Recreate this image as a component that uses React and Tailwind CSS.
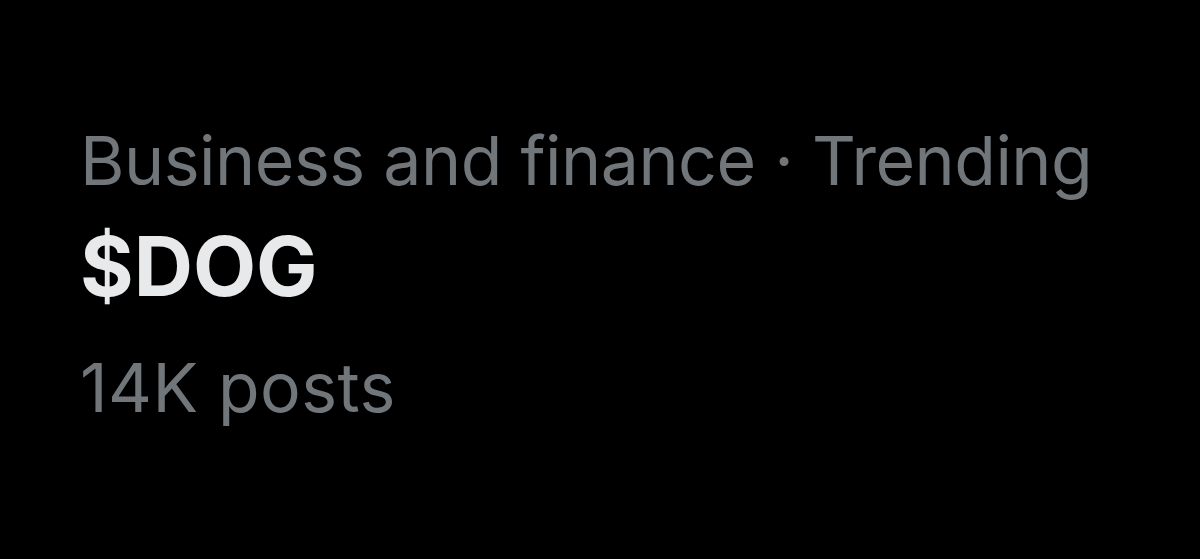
export default function App() {
  return (
    <div className="w-[1200px] h-[559px] bg-black overflow-hidden pl-[80px] pt-[118px]" style={{ fontFamily: 'Inter, "Noto Sans", sans-serif' }}>
      <div className="flex flex-col">
        <div className="text-[68px] leading-[84px] text-[#71767b] tracking-[-0.5px] whitespace-nowrap">Business and finance · Trending</div>
        <div className="text-[82px] leading-[130px] font-bold text-[#e7e9ea] whitespace-nowrap">$DOG</div>
        <div className="text-[68px] leading-[110px] text-[#71767b] tracking-[0.4px] whitespace-nowrap">14K posts</div>
      </div>
    </div>
  );
}
